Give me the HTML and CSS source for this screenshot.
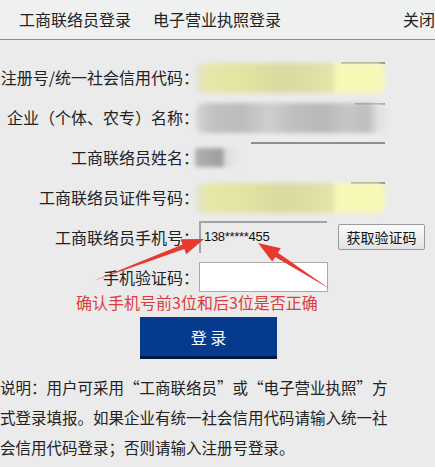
FILE: index.html
```html
<!DOCTYPE html>
<html lang="zh-CN">
<head>
  <meta charset="UTF-8" />
  <meta name="viewport" content="width=device-width, initial-scale=1.0"/>
  <title>企业信息填报 - 登录</title>
  <link rel="stylesheet" href="styles.css">
</head>
<body>
  <div class="topbar">
    <div class="tabs">
      <span class="tab">工商联络员登录</span>
      <span class="tab">电子营业执照登录</span>
    </div>
    <span class="close">关闭</span>
  </div>

  <form class="login" id="login-form">
    <div class="row">
      <label>注册号/统一社会信用代码：</label>
      <div class="field field-line line-r1"><span class="smudge smudge-yellow"></span></div>
    </div>
    <div class="row">
      <label>企业（个体、农专）名称：</label>
      <div class="field field-line line-r2"><span class="smudge smudge-gray"></span></div>
    </div>
    <div class="row">
      <label>工商联络员姓名：</label>
      <div class="field field-line line-r3"><span class="smudge smudge-name"></span></div>
    </div>
    <div class="row">
      <label>工商联络员证件号码：</label>
      <div class="field field-line line-r4"><span class="smudge smudge-yellow"></span></div>
    </div>
    <div class="row">
      <label>工商联络员手机号：</label>
      <div class="phone">138*****455</div>
      <button class="code-btn" type="button">获取验证码</button>
    </div>
    <div class="row">
      <label>手机验证码：</label>
      <input class="code-input" type="text" />
    </div>

    <p class="hint">确认手机号前3位和后3位是否正确</p>

    <button class="submit" type="submit">登 录</button>
  </form>

  <p class="note">说明：用户可采用“工商联络员”或“电子营业执照”方式登录填报。如果企业有统一社会信用代码请输入统一社会信用代码登录；否则请输入注册号登录。</p>

  <svg class="arrows" width="435" height="467" viewBox="0 0 435 467">
    <polygon points="93,281 184.3,249.1 186.2,254.3 204,239 180.6,239.3 182.5,244.5" />
    <polygon points="330,289 277.9,252.8 280.8,248.2 258,243 272.2,261.6 275.2,257" />
  </svg>
</body>
</html>
```

FILE: styles.css
```css
* {
  box-sizing: border-box;
}

body {
  margin: 0;
  background: #ebebeb;
  font-family: "Noto Sans CJK SC", "Microsoft YaHei", sans-serif;
  font-size: 16px;
  color: #222;
  position: relative;
  overflow: hidden;
  height: 467px;
}

.topbar {
  display: flex;
  justify-content: space-between;
  align-items: center;
  height: 40px;
  padding-left: 19px;
  background: #eff1f1;
  border-bottom: 1px solid #8c8c8c;
}

.tabs {
  display: flex;
  gap: 22px;
}

.tab,
.close {
  line-height: 39px;
  white-space: nowrap;
}

.login {
  padding-top: 17px;
}

.row {
  display: flex;
  align-items: center;
  height: 40px;
}

.row label {
  width: 199px;
  flex: none;
  text-align: right;
  white-space: nowrap;
}

.field {
  position: relative;
  width: 186px;
  height: 31px;
}

.field-line::before {
  content: "";
  position: absolute;
  top: 0;
  right: 0;
  height: 2px;
  background: #8e8e8e;
}

.line-r1::before { width: 44px; }
.line-r2::before { width: 30px; top: 1px; }
.line-r3::before { width: 134px; }
.line-r4::before { width: 34px; }

.smudge {
  position: absolute;
  top: 1px;
  left: -3px;
  right: 0;
  bottom: 0;
  border-radius: 8px;
  filter: blur(2px);
}

.smudge-yellow {
  background: linear-gradient(90deg,
    #e2e2d0 0, #e6e8aa 6%, #e2e4a2 26%, #d8daa0 44%,
    #dcdea4 58%, #e2e4a8 72%, #f7f7b6 74%, #f7f7b6 100%);
}

.smudge-gray {
  right: -2px;
  background: linear-gradient(90deg,
    #d6d6d6 0, #c2c2c2 8%, #bcbcbc 24%, #cfcfcf 38%,
    #c0c0c0 50%, #b8b8b8 66%, #c6c6c6 80%, #bdbdbd 90%, #e0e0e0 95%, #e6e6e6 100%);
}

.smudge-name {
  top: 6px;
  bottom: 6px;
  right: auto;
  left: -4px;
  width: 44px;
  border-radius: 3px;
  background: linear-gradient(90deg,
    #b0b0b0 0, #a6a6a6 34%, #9c9c9c 60%, #dedede 70%, #e8e8e8 100%);
}

.phone {
  width: 128px;
  height: 32px;
  padding: 6px 0 0 3px;
  border-top: 2px solid #a3a3a3;
  border-left: 2px solid #a3a3a3;
  font-family: "Liberation Sans", Arial, sans-serif;
  font-size: 13px;
  letter-spacing: -0.3px;
  color: #111;
}

.code-btn {
  margin-left: 11px;
  width: 87px;
  height: 26px;
  padding: 0;
  border: 1px solid #9a9a9a;
  border-radius: 2px;
  background: linear-gradient(#fbfbfb, #e2e2e2);
  font-family: inherit;
  font-size: 14px;
  color: #111;
}

.code-input {
  width: 129px;
  height: 30px;
  margin: 0;
  border: 1px solid #a9a9a9;
  background: #fff;
}

.hint {
  margin: -5px 0 0 76px;
  font-size: 16px;
  line-height: 20px;
  color: #dc3c3c;
}

.submit {
  display: block;
  margin: 5px 0 0 140px;
  width: 137px;
  height: 42px;
  border: none;
  border-bottom: 3px solid #001646;
  background: #053a8d;
  color: #fff;
  font-family: inherit;
  font-size: 16px;
}

.note {
  width: 395px;
  margin: 13px 0 0;
  font-size: 15.5px;
  line-height: 30px;
}

.arrows {
  position: absolute;
  top: 0;
  left: 0;
  fill: #e8392e;
  pointer-events: none;
}
```
